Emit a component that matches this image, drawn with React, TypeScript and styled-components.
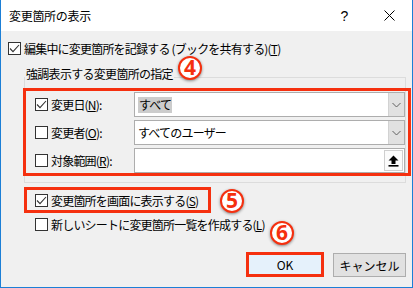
import React from "react";
import styled, { createGlobalStyle } from "styled-components";

const GlobalStyle = createGlobalStyle`
  html, body {
    margin: 0;
    padding: 0;
    background: #ffffff;
  }
  * {
    box-sizing: border-box;
  }
`;

const RED = "#f5300f";

const Window = styled.div`
  position: relative;
  width: 413px;
  height: 288px;
  background: #f0f0f0;
  border: 1px solid #1c7fd6;
  border-top: none;
  display: flex;
  flex-direction: column;
  font-family: "Noto Sans CJK JP", "Noto Sans", sans-serif;
  font-size: 12px;
  letter-spacing: -0.8px;
  color: #000;
  overflow: hidden;
`;

const TitleBar = styled.div`
  height: 31px;
  background: #ffffff;
  display: flex;
  align-items: center;
  padding-left: 8px;
`;

const Title = styled.div`
  flex: 1;
  font-size: 12px;
  letter-spacing: -0.3px;
  line-height: 14px;
`;

const TitleButton = styled.div`
  width: 45px;
  height: 31px;
  display: flex;
  align-items: center;
  justify-content: center;
  font-family: "Liberation Sans", sans-serif;
  font-size: 14px;
  letter-spacing: 0;
`;

const Body = styled.div`
  flex: 1;
  display: flex;
  flex-direction: column;
  padding: 11px 6px 0 7px;
`;

const CheckRow = styled.div<{ $indent?: number; $top?: number }>`
  display: flex;
  align-items: center;
  gap: 3px;
  height: 13px;
  margin-left: ${(p) => p.$indent ?? 0}px;
  margin-top: ${(p) => p.$top ?? 0}px;
  white-space: nowrap;
  line-height: 13px;
`;

const Box = styled.span`
  width: 13px;
  height: 13px;
  flex: none;
  border: 1px solid #333333;
  background: #ffffff;
  display: inline-flex;
  align-items: center;
  justify-content: center;
`;

const Group = styled.fieldset`
  margin: 12px 0 0 16px;
  padding: 1px 0 6px 0;
  border: 1px solid #dcdcdc;
  min-inline-size: 0;
`;

const Legend = styled.legend`
  padding: 0 1px 7px 1px;
  line-height: 13px;
  letter-spacing: -0.7px;
`;

const RedFrame = styled.div`
  border: 3px solid ${RED};
  margin: 0 -6px 0 -2px;
  padding: 1px 3px 0 9px;
  display: flex;
  flex-direction: column;
  gap: 3px;
`;

const FieldRow = styled.div`
  display: flex;
  align-items: center;
  height: 25px;
`;

const FieldLabel = styled.div`
  width: 99px;
  flex: none;
  display: flex;
  align-items: center;
  gap: 3px;
  white-space: nowrap;
`;

const Combo = styled.div`
  flex: 1;
  height: 25px;
  border: 1px solid #adadad;
  background: #ffffff;
  display: flex;
`;

const ComboValue = styled.div`
  flex: 1;
  display: flex;
  align-items: center;
  padding-left: 3px;
  white-space: nowrap;
`;

const Selected = styled.span`
  background: #cccccc;
  padding: 1px 1px;
  line-height: 14px;
`;

const DropButton = styled.div`
  width: 16px;
  flex: none;
  background: #e1e1e1;
  border-left: 1px solid #d2d2d2;
  display: flex;
  align-items: center;
  justify-content: center;
`;

const RefButton = styled.div`
  width: 19px;
  flex: none;
  margin: 1px;
  background: #fbfbfb;
  border: 1px solid #cfcfcf;
  display: flex;
  align-items: center;
  justify-content: center;
`;

const CheckFrame = styled.div`
  align-self: flex-start;
  margin: 4px 0 0 16px;
  width: 187px;
  height: 26px;
  border: 3px solid ${RED};
  padding-left: 8px;
  display: flex;
  align-items: center;
`;

const ButtonRow = styled.div`
  display: flex;
  justify-content: flex-end;
  align-items: flex-start;
  gap: 9px;
  margin-top: 21px;
`;

const DialogButton = styled.div<{ $primary?: boolean }>`
  display: flex;
  align-items: center;
  justify-content: center;
  width: ${(p) => (p.$primary ? 78 : 73)}px;
  height: ${(p) => (p.$primary ? 25 : 24)}px;
  margin-top: ${(p) => (p.$primary ? 0 : 1)}px;
  background: ${(p) => (p.$primary ? "#e5f1fb" : "#e1e1e1")};
  border: ${(p) => (p.$primary ? `3px solid ${RED}` : "1px solid #adadad")};
  letter-spacing: 0;
`;

const Badge = styled.div<{ $x: number; $y: number }>`
  position: absolute;
  left: ${(p) => p.$x - 12}px;
  top: ${(p) => p.$y - 12}px;
  width: 24px;
  height: 24px;
  border-radius: 50%;
  background: #ffffff;
  border: 2px solid ${RED};
  box-shadow: 0 1px 3px rgba(0, 0, 0, 0.45);
  display: flex;
  align-items: center;
  justify-content: center;
  color: ${RED};
  font-family: "Noto Sans", "Liberation Sans", sans-serif;
  font-weight: 700;
  font-size: 21px;
  letter-spacing: 0;
  line-height: 1;
  padding-bottom: 1px;
`;

const Check = ({ checked }: { checked?: boolean }) => (
  <Box>
    {checked && (
      <svg width="11" height="11" viewBox="0 0 11 11">
        <polyline
          points="1,5.5 4,8.6 10,2"
          fill="none"
          stroke="#333"
          strokeWidth="1.1"
        />
      </svg>
    )}
  </Box>
);

const Chevron = () => (
  <svg width="9" height="6" viewBox="0 0 9 6">
    <polyline points="0.5,1 4.5,5 8.5,1" fill="none" stroke="#606060" strokeWidth="1" />
  </svg>
);

const UpArrow = () => (
  <svg width="11" height="12" viewBox="0 0 11 12">
    <polygon points="5.5,0.5 10.5,5.5 7.5,5.5 7.5,9 3.5,9 3.5,5.5 0.5,5.5" fill="#000" />
    <rect x="0.5" y="10" width="10" height="1.6" fill="#000" />
  </svg>
);

const CloseIcon = () => (
  <svg width="11" height="11" viewBox="0 0 11 11">
    <line x1="0.5" y1="0.5" x2="10.5" y2="10.5" stroke="#000" strokeWidth="1" />
    <line x1="10.5" y1="0.5" x2="0.5" y2="10.5" stroke="#000" strokeWidth="1" />
  </svg>
);

export default function App() {
  return (
    <>
      <GlobalStyle />
      <Window>
        <TitleBar>
          <Title>変更箇所の表示</Title>
          <TitleButton>?</TitleButton>
          <TitleButton>
            <CloseIcon />
          </TitleButton>
        </TitleBar>
        <Body>
          <CheckRow>
            <Check checked />
            <span>
              編集中に変更箇所を記録する (ブックを共有する)(<u>T</u>)
            </span>
          </CheckRow>

          <Group>
            <Legend>強調表示する変更箇所の指定</Legend>
            <RedFrame>
              <FieldRow>
                <FieldLabel>
                  <Check checked />
                  <span>
                    変更日(<u>N</u>):
                  </span>
                </FieldLabel>
                <Combo>
                  <ComboValue>
                    <Selected>すべて</Selected>
                  </ComboValue>
                  <DropButton>
                    <Chevron />
                  </DropButton>
                </Combo>
              </FieldRow>
              <FieldRow>
                <FieldLabel>
                  <Check />
                  <span>
                    変更者(<u>O</u>):
                  </span>
                </FieldLabel>
                <Combo>
                  <ComboValue>すべてのユーザー</ComboValue>
                  <DropButton>
                    <Chevron />
                  </DropButton>
                </Combo>
              </FieldRow>
              <FieldRow>
                <FieldLabel>
                  <Check />
                  <span>
                    対象範囲(<u>R</u>):
                  </span>
                </FieldLabel>
                <Combo>
                  <ComboValue />
                  <RefButton>
                    <UpArrow />
                  </RefButton>
                </Combo>
              </FieldRow>
            </RedFrame>
          </Group>

          <CheckFrame>
            <CheckRow>
              <Check checked />
              <span>
                変更箇所を画面に表示する(<u>S</u>)
              </span>
            </CheckRow>
          </CheckFrame>

          <CheckRow $indent={27} $top={5}>
            <Check />
            <span>
              新しいシートに変更箇所一覧を作成する(<u>L</u>)
            </span>
          </CheckRow>

          <ButtonRow>
            <DialogButton $primary>OK</DialogButton>
            <DialogButton>キャンセル</DialogButton>
          </ButtonRow>
        </Body>

        <Badge $x={189} $y={68}>4</Badge>
        <Badge $x={231} $y={201}>5</Badge>
        <Badge $x={281} $y={233}>6</Badge>
      </Window>
    </>
  );
}
